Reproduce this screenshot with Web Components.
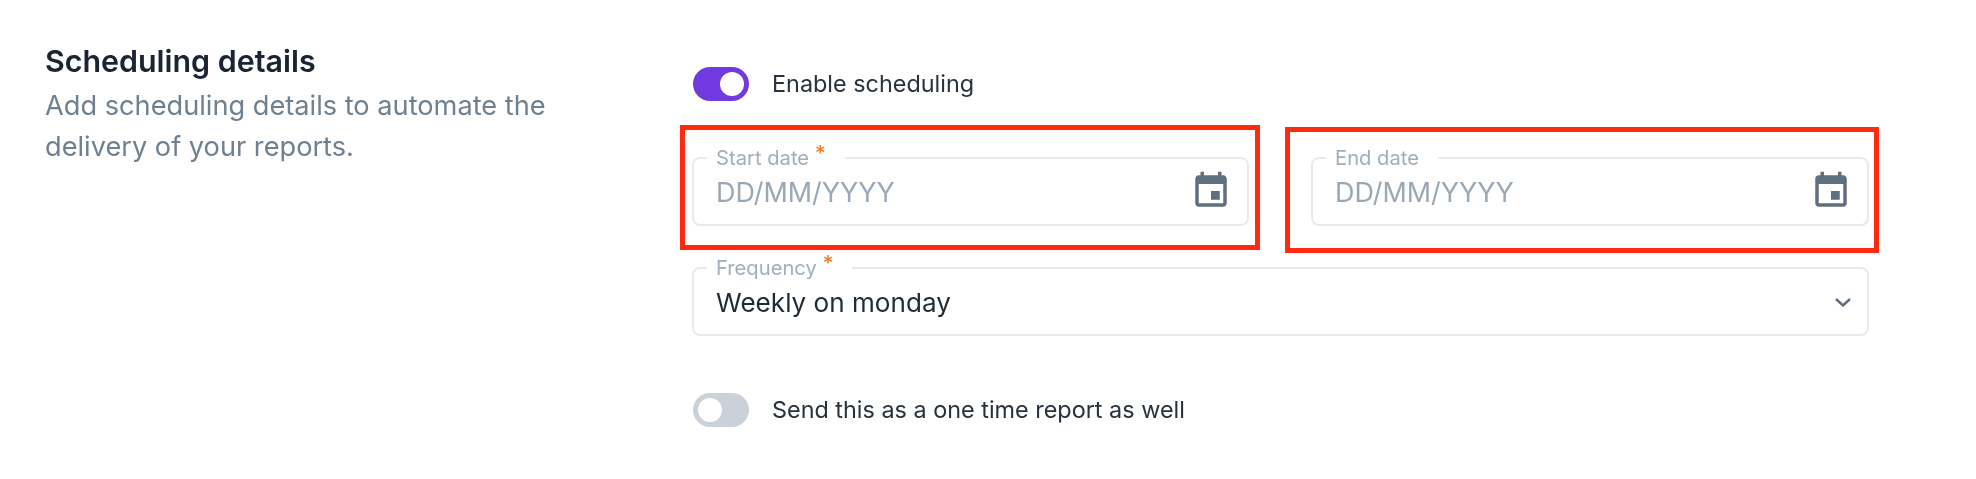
<!DOCTYPE html>
<html lang="en">
<head>
<meta charset="utf-8">
<title>Scheduling details</title>
<style>
  html, body { margin: 0; background: #fff; }
  body { font-family: "Inter", "Noto Sans", sans-serif; }
</style>
</head>
<body>
<scheduling-section>
  <section-intro slot="intro">
    <span slot="title">Scheduling details</span>
    Add scheduling details to automate the delivery of your reports.
  </section-intro>
  <toggle-row checked>Enable scheduling</toggle-row>
  <div slot="dates">
    <date-field label="Start date" required mark="-33,-11,-24,-12"></date-field>
  </div>
  <div slot="dates">
    <date-field label="End date" mark="-31,-10,-27,-26"></date-field>
  </div>
  <select-field slot="frequency" label="Frequency" required>Weekly on monday</select-field>
  <toggle-row slot="once">Send this as a one time report as well</toggle-row>
</scheduling-section>

<script>
const outlineCss = `
    fieldset { margin: 0; padding: 0 14px 8px 22px; min-width: 0; border: 2px solid #e6eaef; border-radius: 8px; display: block; }
    legend { margin-left: -9px; padding: 0 19px 0 9px; height: 22px; line-height: 22px; font-size: 20.2px; color: #a1aebb; white-space: nowrap; }
    .star { color: #f97316; font-size: 21px; margin-left: 6px; position: relative; top: -4px; }
    .body { display: flex; align-items: center; justify-content: space-between; height: 47px; }
`;

class SchedulingSection extends HTMLElement {
    constructor() {
        super();
        this.attachShadow({ mode: 'open' });
        this.shadowRoot.innerHTML = `
            <style>
                :host { display: flex; width: 1976px; height: 479px; box-sizing: border-box; padding: 46px 107px 0 45px; filter: blur(.45px); }
                .left { width: 647px; flex: none; }
                .right { flex: 1; min-width: 0; padding-top: 21px; }
                .dates { display: grid; grid-template-columns: 557px 558px; column-gap: 62px; margin-top: 46px; }
                .frequency { margin-top: 31px; }
                .once { margin-top: 57px; }
            </style>
            <div class="left"><slot name="intro"></slot></div>
            <div class="right">
                <slot></slot>
                <div class="dates"><slot name="dates"></slot></div>
                <div class="frequency"><slot name="frequency"></slot></div>
                <div class="once"><slot name="once"></slot></div>
            </div>
        `;
    }
}

class SectionIntro extends HTMLElement {
    constructor() {
        super();
        this.attachShadow({ mode: 'open' });
        this.shadowRoot.innerHTML = `
            <style>
                :host { display: block; width: 530px; }
                .title { font-size: 30.4px; font-weight: 600; line-height: 30px; color: #1a2433; }
                .desc { font-size: 27.2px; line-height: 41px; color: #6f8090; margin-top: 9px; }
            </style>
            <div class="title"><slot name="title"></slot></div>
            <div class="desc"><slot></slot></div>
        `;
    }
}

class ToggleRow extends HTMLElement {
    constructor() {
        super();
        this.attachShadow({ mode: 'open' });
        const on = this.hasAttribute('checked');
        this.shadowRoot.innerHTML = `
            <style>
                :host { display: flex; align-items: center; gap: 24px; height: 34px; }
                .track { width: 56px; height: 34px; border-radius: 17px; background: ${on ? '#7139e0' : '#cbd1d9'}; display: flex; align-items: center; padding: 0 5px; box-sizing: border-box; justify-content: ${on ? 'flex-end' : 'flex-start'}; margin-left: 1px; }
                .knob { width: 24px; height: 24px; border-radius: 50%; background: #fff; }
                .text { font-size: 23.4px; color: #27323f; margin: -2px 0 0 -1px; }
            </style>
            <div class="track"><div class="knob"></div></div>
            <div class="text"><slot></slot></div>
        `;
    }
}

class DateField extends HTMLElement {
    constructor() {
        super();
        this.attachShadow({ mode: 'open' });
        const label = this.getAttribute('label');
        const star = this.hasAttribute('required') ? '<span class="star">*</span>' : '';
        const [t, r, b, l] = this.getAttribute('mark').split(',');
        this.shadowRoot.innerHTML = `
            <style>
                :host { display: block; position: relative; }
                ${outlineCss}
                .value { font-size: 26.9px; color: #9aa8b6; margin-top: -2px; }
                svg { width: 42px; height: 42px; fill: #5f6f80; flex: none; margin: -3px 1px 0 0; }
                .mark { position: absolute; top: ${+t + 11}px; right: ${r}px; bottom: ${b}px; left: ${l}px; border: 5px solid #ff2a0f; pointer-events: none; }
            </style>
            <fieldset>
                <legend>${label}${star}</legend>
                <div class="body">
                    <span class="value">DD/MM/YYYY</span>
                    <svg viewBox="0 0 24 24"><path d="M17 12h-5v5h5v-5zM16 1v2H8V1H6v2H5c-1.11 0-1.99.9-1.99 2L3 19c0 1.1.89 2 2 2h14c1.1 0 2-.9 2-2V5c0-1.1-.9-2-2-2h-1V1h-2zm3 18H5V8h14v11z"/></svg>
                </div>
            </fieldset>
            <div class="mark"></div>
        `;
    }
}

class SelectField extends HTMLElement {
    constructor() {
        super();
        this.attachShadow({ mode: 'open' });
        const label = this.getAttribute('label');
        const star = this.hasAttribute('required') ? '<span class="star">*</span>' : '';
        this.shadowRoot.innerHTML = `
            <style>
                :host { display: block; }
                ${outlineCss}
                .value { font-size: 26.1px; color: #1f2a37; }
                svg { width: 16px; height: 9px; flex: none; margin-right: 2px; }
            </style>
            <fieldset>
                <legend>${label}${star}</legend>
                <div class="body">
                    <span class="value"><slot></slot></span>
                    <svg viewBox="0 0 16 9"><path d="M1 1l7 6.5L15 1" fill="none" stroke="#5f6f80" stroke-width="2.4"/></svg>
                </div>
            </fieldset>
        `;
    }
}

customElements.define('scheduling-section', SchedulingSection);
customElements.define('section-intro', SectionIntro);
customElements.define('toggle-row', ToggleRow);
customElements.define('date-field', DateField);
customElements.define('select-field', SelectField);
</script>
</body>
</html>
